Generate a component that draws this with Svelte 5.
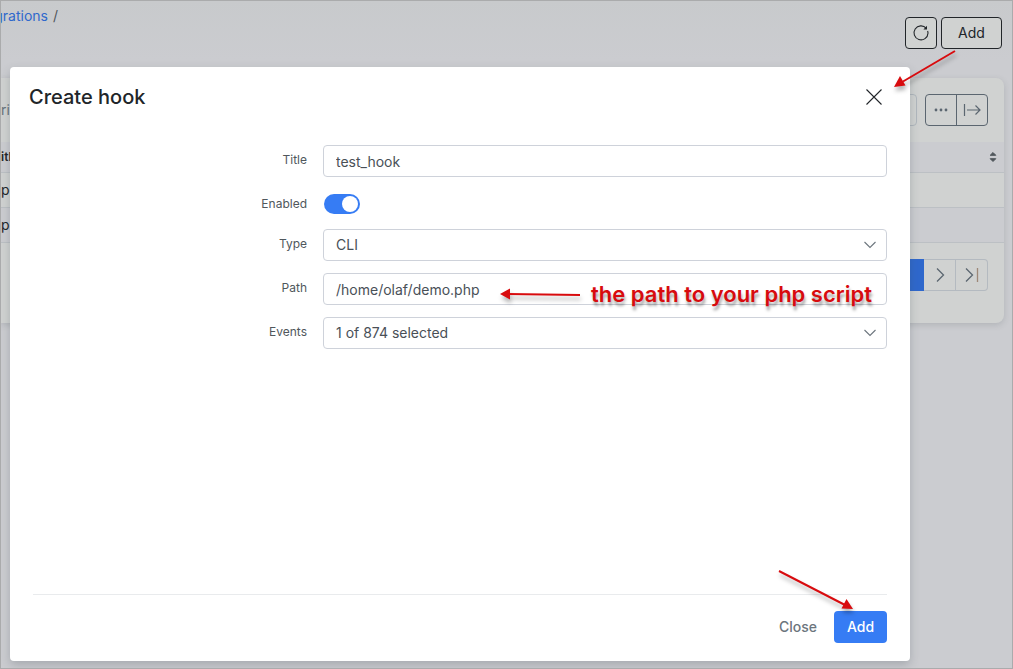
<script>
  let title = $state('test_hook');
  let enabled = $state(true);
  let path = $state('/home/olaf/demo.php');
</script>

<div class="page">
  <header class="topbar">
    <nav class="crumbs" aria-label="Breadcrumb">
      <a href="#integrations">grations</a><span>/</span>
    </nav>
    <div class="actions">
      <button class="outline square" aria-label="Refresh">
        <svg width="18" height="18" viewBox="0 0 18 18" fill="none" stroke="currentColor" stroke-width="1.1">
          <path d="M14.300 4.300A7 7 0 1 0 16 9.200Q16 8 15.600 7" />
          <path d="M15 1.800V5.400H11.400z" fill="currentColor" stroke="none" />
        </svg>
      </button>
      <button class="outline wide">Add</button>
    </div>
  </header>

  <main class="card">
    <div class="toolbar">
      <span class="entries">rie</span>
      <div class="tools">
        <input class="search" aria-label="Search" />
        <div class="group">
          <button aria-label="More">
            <svg width="16" height="16" viewBox="0 0 16 16" fill="currentColor">
              <circle cx="3" cy="8" r="1.4" /><circle cx="8" cy="8" r="1.4" /><circle cx="13" cy="8" r="1.4" />
            </svg>
          </button>
          <button aria-label="Expand columns">
            <svg width="20" height="16" viewBox="0 0 20 16" fill="none" stroke="currentColor" stroke-width="1.2">
              <path d="M2.500 2v12M5 8h13M13.500 3.500L18 8l-4.500 4.500" />
            </svg>
          </button>
        </div>
      </div>
    </div>
    <table>
      <thead>
        <tr>
          <th>itle</th>
          <th class="sort">
            <svg width="8" height="12" viewBox="0 0 8 12" fill="#50575c" stroke="#50575c" stroke-linejoin="round">
              <path d="M4 1.500L6.800 4.300H1.200zM4 10.500L1.200 7.700H6.800z" />
            </svg>
          </th>
        </tr>
      </thead>
      <tbody>
        <tr><td>p</td><td></td></tr>
        <tr class="alt"><td>p</td><td></td></tr>
      </tbody>
    </table>
    <div class="pager">
      <button class="current" aria-label="Current page"></button>
      <button aria-label="Next page">
        <svg width="16" height="16" viewBox="0 0 16 16" fill="none" stroke="#5b6670" stroke-width="1.3">
          <path d="M5 1.500L11.500 8L5 14.500" />
        </svg>
      </button>
      <button class="last" aria-label="Last page">
        <svg width="16" height="16" viewBox="0 0 16 16" fill="none" stroke="#5b6670" stroke-width="1.3">
          <path d="M2 1.500L8.500 8L2 14.500" />
          <path d="M13.500 1v14" stroke="#9d8878" />
        </svg>
      </button>
    </div>
  </main>

  <div class="modal" role="dialog" aria-labelledby="heading">
    <div class="modal-head">
      <h1 id="heading">Create hook</h1>
      <button class="dismiss" aria-label="Dismiss">
        <svg width="18" height="18" viewBox="0 0 18 18" fill="none" stroke="#212529" stroke-width="1.1">
          <path d="M1.500 1.500l15 15M16.500 1.500l-15 15" />
        </svg>
      </button>
    </div>

    <form class="fields">
      <div class="row">
        <label for="title">Title</label>
        <input id="title" class="control" type="text" bind:value={title} />
      </div>
      <div class="row short">
        <label for="enabled">Enabled</label>
        <input id="enabled" class="switch" type="checkbox" role="switch" bind:checked={enabled} />
      </div>
      <div class="row">
        <label for="type">Type</label>
        <div class="select">
          <select id="type" class="control"><option>CLI</option></select>
          <svg width="14" height="8" viewBox="0 0 14 8" fill="none" stroke="#6c757d" stroke-width="1.1">
            <path d="M1.500 1L7 6.500L12.500 1" />
          </svg>
        </div>
      </div>
      <div class="row">
        <label for="path">Path</label>
        <input id="path" class="control" type="text" bind:value={path} />
      </div>
      <div class="row">
        <label for="events">Events</label>
        <div class="select">
          <select id="events" class="control"><option>1 of 874 selected</option></select>
          <svg width="14" height="8" viewBox="0 0 14 8" fill="none" stroke="#6c757d" stroke-width="1.1">
            <path d="M1.500 1L7 6.500L12.500 1" />
          </svg>
        </div>
      </div>
    </form>

    <div class="modal-foot">
      <button class="plain">Close</button>
      <button class="primary">Add</button>
    </div>
  </div>

  <svg class="notes" aria-hidden="true" fill="#d80b0e" stroke="#d80b0e" stroke-width="2">
    <path d="M955 51L903 81.500" />
    <path d="M894 87L900 76L905.500 85.500z" stroke="none" />
    <path d="M580 295L508 294" />
    <path d="M500 294L510 288.500V299.500z" stroke="none" />
    <path d="M779 571L845 605" />
    <path d="M853 609L841.500 608.500L846.500 599z" stroke="none" />
  </svg>
  <p class="caption">the path to your php script</p>
</div>

<style>
  :global(body) {
    margin: 0;
  }
  .page {
    position: relative;
    box-sizing: border-box;
    min-height: 100vh;
    overflow: hidden;
    border: 1px solid #aaabac;
    background: linear-gradient(#c8cacc, #cbccd0 60px);
    font-family: Inter, 'Open Sans', sans-serif;
    font-size: 14px;
    line-height: 20px;
    color: #212529;
  }
  button,
  input,
  select {
    box-sizing: border-box;
    margin: 0;
    font: inherit;
  }
  button {
    display: inline-flex;
    align-items: center;
    justify-content: center;
    padding: 0;
    border: 0;
    background: none;
    color: inherit;
  }
  svg {
    display: block;
    flex: none;
  }
  .topbar {
    display: flex;
    justify-content: space-between;
    height: 77px;
    padding-right: 10px;
  }
  .crumbs {
    display: flex;
    justify-content: flex-end;
    gap: 5px;
    width: 57px;
    padding-top: 5px;
    color: #50575c;
  }
  .crumbs a {
    color: #2f68cc;
    text-decoration: none;
  }
  .actions {
    display: flex;
    gap: 4px;
    padding-top: 16px;
  }
  .outline {
    height: 32px;
    border: 1px solid #212529;
    border-radius: 4px;
    background: #d0d2d1;
  }
  .square {
    width: 32px;
  }
  .wide {
    width: 61px;
  }
  .card {
    margin-right: 8px;
    border-radius: 0 8px 8px 0;
    background: #d0d2d1;
    box-shadow: 0 2px 6px rgba(60, 70, 80, 0.18);
  }
  .toolbar {
    display: flex;
    justify-content: space-between;
    align-items: center;
    height: 64px;
    padding-right: 16px;
  }
  .entries {
    color: #66727c;
  }
  .tools {
    display: flex;
    gap: 8px;
  }
  .search {
    width: 200px;
    height: 32px;
    border: 1px solid #b0b7bd;
    border-radius: 4px;
    background: none;
  }
  .group {
    display: flex;
    border: 1px solid #5b6670;
    border-radius: 4px;
    color: #5b6670;
  }
  .group button {
    width: 30px;
    height: 30px;
  }
  .group button + button {
    width: 31px;
    border-left: 1px solid #5b6670;
  }
  table {
    width: 100%;
    border-collapse: collapse;
  }
  th,
  td {
    height: 34px;
    padding: 0;
    border-bottom: 1px solid #bcc0c4;
    text-align: left;
  }
  th {
    height: 30px;
    font-size: 12px;
    font-weight: 600;
  }
  thead,
  .alt {
    background: #cbccd0;
  }
  .sort svg {
    margin: 0 7px 0 auto;
  }
  .pager {
    display: flex;
    justify-content: flex-end;
    padding: 16px 16px 32px;
  }
  .pager button {
    width: 32px;
    height: 32px;
    border: 1px solid #b4bac0;
    border-left-width: 0;
  }
  .pager .current {
    border-color: #2f68cc;
    background: #2f68cc;
  }
  .pager .last {
    border-radius: 0 4px 4px 0;
  }
  .modal {
    position: absolute;
    inset: 66px 102px 7px 9px;
    display: flex;
    flex-direction: column;
    border-radius: 4px;
    background: #fff;
    box-shadow: 0 4px 10px rgba(60, 70, 80, 0.25);
  }
  .modal-head {
    display: flex;
    align-items: center;
    justify-content: space-between;
    padding: 14px 20px 0 19px;
  }
  h1 {
    margin: 0;
    font-size: 20px;
    font-weight: 500;
    line-height: 32px;
  }
  .dismiss {
    width: 32px;
    height: 32px;
  }
  .fields {
    display: flex;
    flex: 1;
    flex-direction: column;
    gap: 12px;
    padding: 32px 23px 0;
  }
  .row {
    display: grid;
    grid-template-columns: 274fr 564fr;
    gap: 16px;
    align-items: center;
    height: 32px;
  }
  .short {
    box-sizing: border-box;
    height: 28px;
    padding-top: 2px;
  }
  label {
    padding-bottom: 2px;
    color: #50575c;
    font-size: 12px;
    text-align: right;
  }
  .short label {
    padding: 0;
  }
  .control {
    width: 100%;
    height: 32px;
    padding: 0 12px;
    border: 1px solid #ced2da;
    border-radius: 4px;
    outline: 0;
    background: #fff;
    color: #495057;
  }
  .select {
    position: relative;
  }
  select {
    appearance: none;
  }
  .select svg {
    position: absolute;
    top: 12px;
    right: 10px;
    pointer-events: none;
  }
  .switch {
    appearance: none;
    width: 36px;
    height: 20px;
    margin-left: 1px;
    padding: 2px;
    border-radius: 10px;
    background: #adb5bd;
  }
  .switch::before {
    content: '';
    display: block;
    width: 16px;
    height: 16px;
    border-radius: 50%;
    background: #fff;
  }
  .switch:checked {
    background: #367cf4;
  }
  .switch:checked::before {
    margin-left: auto;
  }
  .modal-foot {
    display: flex;
    justify-content: flex-end;
    gap: 4px;
    margin: 0 23px;
    padding: 16px 0 18px;
    border-top: 1px solid #e9ebed;
    font-weight: 500;
  }
  .plain {
    height: 32px;
    padding: 0 13px;
    color: #6c757d;
    font-weight: 400;
  }
  .modal-foot .plain {
    font-weight: 500;
  }
  .primary {
    width: 53px;
    height: 32px;
    border-radius: 4px;
    background: #367cf4;
    color: #fff;
  }
  .notes {
    position: absolute;
    top: -1px;
    left: -1px;
    width: 100%;
    height: 100%;
    filter: drop-shadow(1px 4px 2px rgba(0, 0, 0, 0.3));
    pointer-events: none;
  }
  .caption {
    position: absolute;
    top: 279px;
    left: 590px;
    margin: 0;
    color: #d80b0e;
    font-size: 22px;
    font-weight: 600;
    line-height: 28px;
    text-shadow: 1px 4px 3px rgba(0, 0, 0, 0.35);
    white-space: nowrap;
  }
</style>
